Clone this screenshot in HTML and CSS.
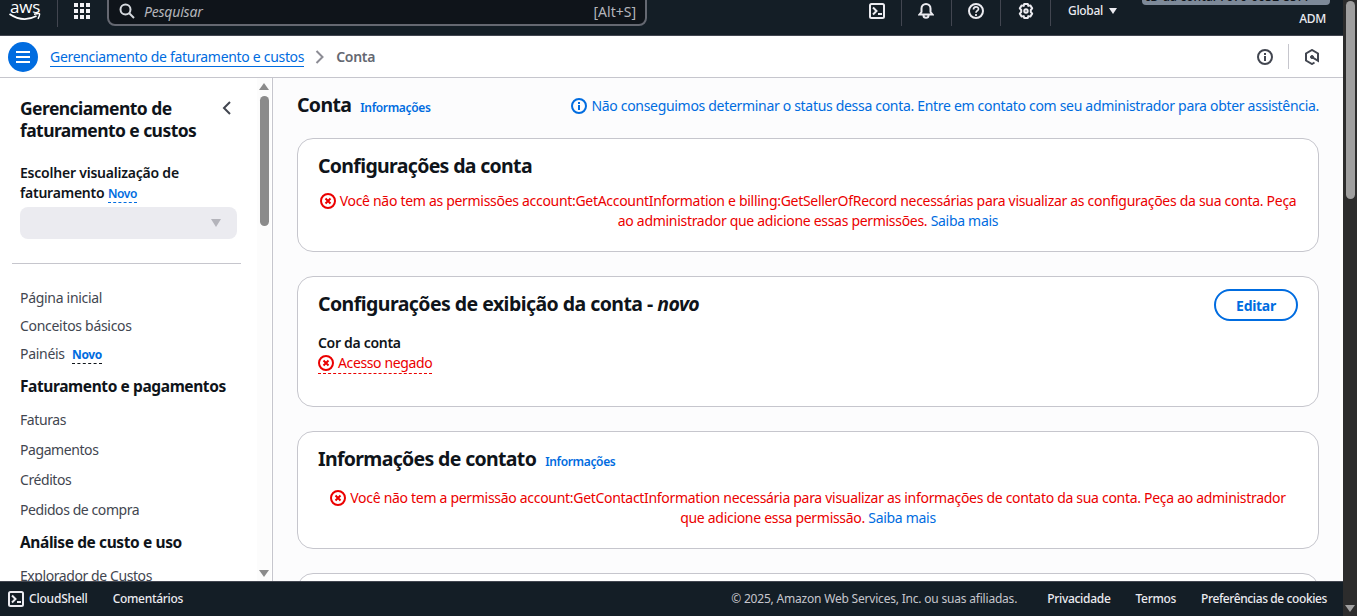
FILE: index.html
```html
<!DOCTYPE html>
<html lang="pt-BR">
<head>
<meta charset="utf-8">
<title>Conta</title>
<link rel="stylesheet" href="styles.css">
</head>
<body>
<svg class="defs" width="0" height="0">
  <symbol id="error" viewBox="0 0 16 16"><circle cx="8" cy="8" r="7" fill="none" stroke="currentColor" stroke-width="2"/><path d="M5.500 5.500l5 5M10.500 5.500l-5 5" stroke="currentColor" stroke-width="2"/></symbol>
  <symbol id="info" viewBox="0 0 16 16"><circle cx="8" cy="8" r="7" fill="none" stroke="currentColor" stroke-width="2"/><path d="M8 4v2M8 7v5" fill="none" stroke="currentColor" stroke-width="2"/></symbol>
  <symbol id="shell" viewBox="0 0 16 16"><rect x="1" y="1" width="14" height="14" rx="1.500" fill="none" stroke="currentColor" stroke-width="2"/><path d="M4 4.500L7.500 8 4 11.500M9 11h4" fill="none" stroke="currentColor" stroke-width="2"/></symbol>
</svg>
<div class="screen">
  <div class="app">
    <header class="topnav">
      <div class="brand">
        <span class="aws">aws</span>
        <svg class="smile" width="32" height="8" viewBox="0 0 32 8"><path d="M.5 1Q14 10 27.500 3" fill="none" stroke="#fff" stroke-width="1.800"/><path d="M25 1.200q5-1.200 5.500-.3t-1.500 5" fill="none" stroke="#fff" stroke-width="1.500"/></svg>
      </div>
      <svg class="grid-icon" width="16" height="16" viewBox="0 0 16 16" fill="#f3f3f7"><path d="M0 0h4v4H0zM6 0h4v4H6zM12 0h4v4h-4zM0 6h4v4H0zM6 6h4v4H6zM12 6h4v4h-4zM0 12h4v4H0zM6 12h4v4H6zM12 12h4v4h-4z"/></svg>
      <div class="search">
        <svg width="16" height="16" viewBox="0 0 16 16" fill="none" stroke="#d5d9de" stroke-width="2"><circle cx="6.500" cy="6.500" r="5"/><path d="M10 10l5 5"/></svg>
        <span class="placeholder">Pesquisar</span><span class="shortcut">[Alt+S]</span>
      </div>
      <div class="tools">
        <span class="tool"><svg width="16" height="16"><use href="#shell"/></svg></span>
        <span class="tool bell"><svg width="16" height="16" viewBox="0 0 16 16" fill="none" stroke="currentColor" stroke-width="2"><path d="M1.500 11.500h13L12.500 9V5.500C12.500 3 10.500 1 8 1S3.500 3 3.500 5.500V9zM5.500 12.500c0 3 5 3 5 0"/></svg></span>
        <span class="tool help"><svg width="16" height="16" viewBox="0 0 16 16" fill="none" stroke="currentColor" stroke-width="2"><circle cx="8" cy="8" r="7"/><path d="M5.500 6.500C5.500 3 10.500 3.200 10.500 6 10.500 8 8 7.500 8 9.700M8 11v2" stroke-width="1.700"/></svg></span>
        <span class="tool"><svg width="16" height="16" viewBox="0 0 16 16" fill="none" stroke="currentColor" stroke-width="2" stroke-linejoin="round"><path d="M6.200 1h3.600l.5 1.900 2-.5 1.900 3L12.800 7v2l1.400 1.600-1.900 3-2-.5-.5 1.900H6.200l-.5-1.900-2 .5-1.900-3L3.200 9V7L1.800 5.400l1.900-3 2 .5z"/><circle cx="8" cy="8" r="1.700"/></svg></span>
        <span class="region">Global <i class="caret"></i></span>
      </div>
      <div class="account"><span class="badge">ID da conta: 7070-0032-8577</span><span class="role">ADM</span></div>
    </header>

    <div class="crumbs">
      <span class="menu"><i></i><i></i><i></i></span>
      <a class="crumb-link">Gerenciamento de faturamento e custos</a>
      <svg class="crumb-sep" width="10" height="14" viewBox="0 0 10 14"><path d="M1.500 1L7.500 7l-6 6" fill="none" stroke="#8c8c94" stroke-width="2"/></svg>
      <span class="crumb-current">Conta</span>
      <span class="crumb-tools">
        <svg width="16" height="16"><use href="#info"/></svg>
        <svg class="hex" width="16" height="16" viewBox="0 0 16 16" fill="none" stroke="currentColor" stroke-width="2"><path d="M10.500 13.500L8 15l-6-3.500v-7L8 1l6 3.500v7.300L8 8.200"/><circle cx="8" cy="8" r="1.500" fill="currentColor" stroke-width="1"/></svg>
      </span>
    </div>

    <div class="body">
      <nav class="side">
        <div class="side-content">
          <div class="side-head"><h2>Gerenciamento de<br>faturamento e custos</h2>
            <svg width="10" height="14" viewBox="0 0 10 14"><path d="M8 1L2 7l6 6" fill="none" stroke="#424650" stroke-width="2"/></svg></div>
          <div class="view-label">Escolher visualização de<br>faturamento <span class="new">Novo</span></div>
          <div class="select"><i></i></div>
          <hr>
          <ul class="links top"><li>Página inicial</li><li>Conceitos básicos</li><li>Painéis <span class="new dark">Novo</span></li></ul>
          <h3>Faturamento e pagamentos</h3>
          <ul class="links"><li>Faturas</li><li>Pagamentos</li><li>Créditos</li><li>Pedidos de compra</li></ul>
          <h3>Análise de custo e uso</h3>
          <ul class="links"><li>Explorador de Custos</li></ul>
        </div>
        <div class="side-scroll"><i class="up"></i><i class="thumb"></i><i class="down"></i></div>
      </nav>
      <main>
        <div class="page-head"><h1>Conta</h1><a class="info-link">Informações</a>
          <span class="status"><svg width="16" height="16"><use href="#info"/></svg><span>Não conseguimos determinar o status dessa conta. Entre em contato com seu administrador para obter assistência.</span></span></div>
        <section class="card one">
          <h2>Configurações da conta</h2>
          <p class="err"><svg width="16" height="16"><use href="#error"/></svg><span class="first">Você não tem as permissões account:GetAccountInformation e billing:GetSellerOfRecord necessárias para visualizar as configurações da sua conta. Peça</span><br><span>ao administrador que adicione essas permissões. <a>Saiba mais</a></span></p>
        </section>
        <section class="card two">
          <div class="card-head"><h2>Configurações de exibição da conta - <em>novo</em></h2><button>Editar</button></div>
          <div class="field">Cor da conta</div>
          <span class="denied"><svg width="16" height="16"><use href="#error"/></svg><span>Acesso negado</span></span>
        </section>
        <section class="card three">
          <div class="title-row"><h2>Informações de contato</h2><a class="info-link">Informações</a></div>
          <p class="err"><svg width="16" height="16"><use href="#error"/></svg><span class="first">Você não tem a permissão account:GetContactInformation necessária para visualizar as informações de contato da sua conta. Peça ao administrador</span><br><span>que adicione essa permissão. <a>Saiba mais</a></span></p>
        </section>
        <section class="card four"></section>
      </main>
    </div>

    <footer>
      <svg width="16" height="16"><use href="#shell"/></svg><span class="f1">CloudShell</span><span class="f2">Comentários</span>
      <span class="copy">© 2025, Amazon Web Services, Inc. ou suas afiliadas.</span><span class="f3">Privacidade</span><span class="f4">Termos</span><span class="f5">Preferências de cookies</span>
    </footer>
  </div>
  <div class="page-scroll"><i class="thumb"></i><i class="down"></i></div>
</div>
</body>
</html>
```
FILE: styles.css
```css
* { box-sizing: border-box; }
body { margin: 0; font: 14px/20px "Noto Sans", "Open Sans", sans-serif; letter-spacing: -.31px; color: #0f141a; overflow: hidden; }
h1, h2, h3, p, ul { margin: 0; padding: 0; }
ul { list-style: none; }
span, a, p, h1, h2, h3, li { white-space: nowrap; }
svg { flex: none; }
.defs { position: absolute; }
.screen { display: flex; width: 1357px; height: 616px; overflow: hidden; }
.app { display: flex; flex-direction: column; width: 1343px; }

.topnav { display: flex; height: 36px; flex: none; background: #141e26; border-bottom: 1px solid #424650; overflow: hidden; color: #ebebf0; }
.brand { width: 58px; height: 27px; border-right: 1px solid #424650; padding-left: 9px; display: flex; flex-direction: column; }
.aws { font: 500 17px/13px "Open Sans", sans-serif; color: #fff; height: 13px; letter-spacing: -.2px; padding-left: 1px; }
.grid-icon { margin: 3px 17px 0 16px; }
.search { display: flex; width: 540px; height: 36px; margin-top: -10px; border: 2px solid #656871; border-radius: 8px; background: #0f141a; padding: 11px 9px 0 10px; color: #b4b4bb; }
.placeholder { font-style: italic; margin-left: 9px; line-height: 18px; letter-spacing: -.2px; }
.shortcut { margin-left: auto; line-height: 17px; letter-spacing: 0; }
.tools { display: flex; margin-left: 205px; height: 26px; }
.tool { width: 50px; border-right: 1px solid #424650; padding: 3px 0 0 17px; }
.tool.bell { padding-left: 16px; }
.tool.help { width: 49px; padding-left: 16px; }
.region { padding: 1px 0 0 17px; font-size: 12px; font-weight: 500; }
.caret { display: inline-block; border: 4px solid transparent; border-top: 6px solid #ebebf0; border-bottom: 0; margin: 0 0 1px 3px; }
.account { margin-left: auto; margin-right: 13px; width: 188px; text-align: right; font-size: 12px; letter-spacing: 0; }
.badge { display: block; height: 16px; margin-top: -11px; background: #7d8998; color: #0f141a; border-radius: 4px; text-align: left; padding-left: 4px; line-height: 16px; font-weight: 500; letter-spacing: .1px; }
.role { display: block; margin: 4px 4px 0 0; font-weight: 500; letter-spacing: -.3px; }

.crumbs { display: flex; align-items: center; height: 42px; flex: none; border-bottom: 1px solid #c6c6cd; padding-left: 8px; background: #fff; }
.menu { width: 30px; height: 30px; border-radius: 50%; background: #006ce0; display: flex; flex-direction: column; gap: 3px; padding: 9px 8px; }
.menu i { height: 2px; background: #fff; }
.crumb-link { color: #006ce0; margin-left: 12px; border-bottom: 1px solid; height: 20px; }
.crumb-sep { margin: 0 11px 0 11px; }
.crumb-current { color: #656871; font-weight: 600; }
.crumb-tools { margin-left: auto; display: flex; align-items: center; color: #424650; margin-right: 23px; height: 25px; }
.crumb-tools .hex { box-sizing: content-box; margin-left: 15px; border-left: 1px solid #c6c6cd; padding: 5px 0 4px 15px; }

.body { display: flex; height: 503px; flex: none; overflow: hidden; }
.side { width: 273px; border-right: 1px solid #c6c6cd; display: flex; background: #fff; }
.side-content { width: 257px; padding: 20px 16px 0 20px; }
.side-head { display: flex; justify-content: space-between; height: 54px; }
.side-head h2 { font-size: 17.5px; line-height: 22px; margin-top: -1px; letter-spacing: -.57px; }
.side-head svg { margin: 3px 9px 0 0; }
.view-label { font-weight: 600; margin-top: 11px; letter-spacing: -.22px; }
.new { display: inline-block; font-size: 12px; line-height: 17px; font-weight: 600; color: #006ce0; border-bottom: 1px dashed; letter-spacing: -.4px; }
.new.dark { border-color: #0f141a; margin-left: 4px; font-weight: 700; }
.select { height: 32px; width: 217px; border-radius: 8px; background: #ebebf0; margin-top: 4px; padding: 12px 16px; }
.select i { display: block; margin-left: auto; width: 0; border: 5px solid transparent; border-top: 8px solid #b4b4bb; border-bottom: 0; }
hr { border: 0; border-top: 1px solid #c6c6cd; margin: 24px 0 24px -8px; width: 229px; }
.links { color: #424650; letter-spacing: -.42px; }
.links li { height: 20px; margin-bottom: 10px; }
.links.top { letter-spacing: -.3px; }
.links.top li { margin-bottom: 8px; }
h3 { font-size: 15.5px; line-height: 20px; margin: 12px 0 14px; letter-spacing: -.4px; }
.side-scroll { width: 14px; background: #fcfcfc; display: flex; flex-direction: column; align-items: center; padding: 5px 0 4px; }
.side-scroll .up { border: 5px solid transparent; border-bottom: 7px solid #8b8b8b; border-top: 0; }
.side-scroll .thumb { width: 9px; height: 130px; border-radius: 5px; background: #8b8b8b; margin-top: 6px; }
.side-scroll .down { border: 5px solid transparent; border-top: 7px solid #8b8b8b; border-bottom: 0; margin-top: auto; }

main { flex: 1; background: #fcfcfd; padding: 14px 24px 0; }
.page-head { display: flex; height: 46px; }
h1 { font-size: 19.5px; line-height: 26px; letter-spacing: -.65px; }
.info-link { font-size: 12px; font-weight: 600; color: #006ce0; line-height: 20px; margin: 6px 0 0 9px; letter-spacing: -.35px; }
.title-row .info-link { margin-top: 5px; }
.status { margin-left: auto; display: flex; color: #006ce0; gap: 4px; padding-top: 4px; }
.status svg { margin-top: 2px; }
.card { background: #fff; border: 1px solid #c6c6cd; border-radius: 16px; width: 1022px; margin-bottom: 24px; padding: 15px 20px 0; }
.card h2 { font-size: 19.5px; line-height: 24px; letter-spacing: -.67px; }
.two h2 { letter-spacing: -.55px; }
.one { height: 114px; }
.two { height: 131px; padding-top: 12px; }
.three { height: 118px; }
.err { color: #eb0000; text-align: center; margin-top: 13px; letter-spacing: -.3px; }
.three .err { margin-top: 17px; }
.err svg { vertical-align: -3px; margin-right: 4px; }
.err a { color: #006ce0; }
.card-head { display: flex; justify-content: space-between; align-items: center; height: 32px; }
.card-head h2 { margin-top: -2px; }
button { width: 84px; height: 32px; border: 2px solid #006ce0; border-radius: 16px; background: #fff; color: #006ce0; font: 700 14px "Noto Sans", sans-serif; letter-spacing: -.3px; padding: 0; }
.field { font-weight: 600; margin-top: 12px; }
.denied { display: inline-flex; align-items: center; color: #eb0000; gap: 4px; height: 21px; border-bottom: 1px dashed; letter-spacing: -.37px; }
.title-row { display: flex; height: 24px; }
.four { height: 100px; }

footer { display: flex; align-items: center; height: 35px; background: #141e26; border-top: 1px solid #424650; color: #ebebf0; font-size: 12px; font-weight: 500; letter-spacing: -.3px; padding: 0 16px 0 8px; }
.f1 { margin-left: 5px; letter-spacing: -.2px; }
.f2 { margin-left: 25px; }
.copy { margin-left: auto; color: #c6c6cd; font-weight: 400; letter-spacing: -.2px; }
.f3 { margin-left: 30px; }
.f4, .f5 { margin-left: 25px; }
.f5 { letter-spacing: -.4px; }
.page-scroll { width: 14px; background: #2c2c2c; display: flex; flex-direction: column; align-items: center; padding: 1px 0 4px; }
.page-scroll .thumb { width: 9px; height: 198px; border-radius: 5px; background: #9f9f9f; }
.page-scroll .down { border: 5px solid transparent; border-top: 7px solid #9f9f9f; border-bottom: 0; margin-top: auto; }
```
